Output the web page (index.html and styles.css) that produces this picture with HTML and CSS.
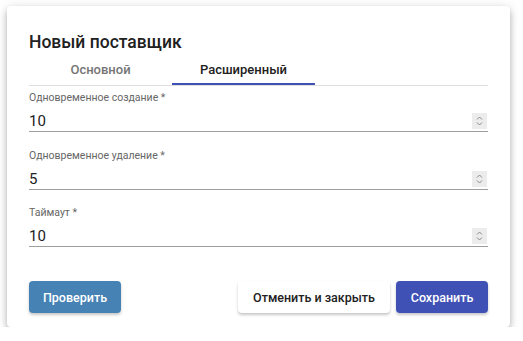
FILE: index.html
```html
<!DOCTYPE html>
<html lang="ru">
<head>
    <meta charset="UTF-8">
    <meta name="viewport" content="width=device-width, initial-scale=1.0">
    <title>Новый поставщик</title>
    <link rel="stylesheet" href="styles.css">
</head>
<body>

<div class="dialog">
    <h2 class="dialog-title">Новый поставщик</h2>

    <div class="tabs">
        <div class="tab">Основной</div>
        <div class="tab active">Расширенный</div>
    </div>

    <div class="field">
        <label>Одновременное создание *</label>
        <div class="input">
            <span class="value">10</span>
            <span class="spinner">
                <svg width="7" height="12" viewBox="0 0 7 12"><path d="M1 4.5 L3.5 2 L6 4.5 M1 7.5 L3.5 10 L6 7.5" fill="none" stroke="#8a8a8a" stroke-width="1"/></svg>
            </span>
        </div>
    </div>

    <div class="field">
        <label>Одновременное удаление *</label>
        <div class="input">
            <span class="value">5</span>
            <span class="spinner">
                <svg width="7" height="12" viewBox="0 0 7 12"><path d="M1 4.5 L3.5 2 L6 4.5 M1 7.5 L3.5 10 L6 7.5" fill="none" stroke="#8a8a8a" stroke-width="1"/></svg>
            </span>
        </div>
    </div>

    <div class="field">
        <label>Таймаут *</label>
        <div class="input">
            <span class="value">10</span>
            <span class="spinner">
                <svg width="7" height="12" viewBox="0 0 7 12"><path d="M1 4.5 L3.5 2 L6 4.5 M1 7.5 L3.5 10 L6 7.5" fill="none" stroke="#8a8a8a" stroke-width="1"/></svg>
            </span>
        </div>
    </div>

    <div class="actions">
        <button class="btn btn-check">Проверить</button>
        <div class="actions-right">
            <button class="btn btn-cancel">Отменить и закрыть</button>
            <button class="btn btn-save">Сохранить</button>
        </div>
    </div>
</div>

</body>
</html>
```

FILE: styles.css
```css
* {
    margin: 0;
    padding: 0;
    box-sizing: border-box;
}

body {
    font-family: Roboto, 'Noto Sans', sans-serif;
    background-color: #fff;
    color: #212121;
}

/* Dialog card */
.dialog {
    width: 503px;
    height: 321px;
    margin: 6px 0 0 7px;
    padding: 24px 22px 14px;
    background-color: #fff;
    border-radius: 4px;
    box-shadow: 0 4px 6px rgba(0, 0, 0, 0.24), 0 1px 12px rgba(0, 0, 0, 0.12);
}

.dialog-title {
    font-size: 17.5px;
    font-weight: 500;
    line-height: 24px;
    color: #212121;
}

/* Tabs */
.tabs {
    display: flex;
    border-bottom: 1px solid #e0e0e0;
    margin-bottom: 5px;
}

.tab {
    width: 143px;
    padding: 8px 0 5px;
    text-align: center;
    font-size: 13px;
    font-weight: 500;
    line-height: 16px;
    color: #757575;
    border-bottom: 2px solid transparent;
}

.tab.active {
    color: #212121;
    border-bottom-color: #3f51b5;
}

/* Fields */
.field {
    margin-bottom: 16.5px;
}

.field label {
    display: block;
    font-size: 10.5px;
    line-height: 14px;
    color: #666;
    margin-bottom: 6px;
}

.input {
    display: flex;
    align-items: center;
    justify-content: space-between;
    height: 21px;
    border-bottom: 1px solid #9e9e9e;
}

.value {
    font-size: 15px;
    line-height: 20px;
    color: #212121;
}

.spinner {
    display: flex;
    align-items: center;
    justify-content: center;
    width: 15px;
    height: 16px;
    margin-right: 1px;
    background-color: #ececec;
}

/* Buttons */
.actions {
    display: flex;
    justify-content: space-between;
    margin-top: 34px;
}

.actions-right {
    display: flex;
    gap: 6px;
}

.btn {
    height: 32px;
    padding: 0 10px;
    font-family: Roboto, sans-serif;
    font-size: 12.5px;
    font-weight: 500;
    border: none;
    border-radius: 4px;
    box-shadow: 0 2px 3px rgba(0, 0, 0, 0.22);
    cursor: pointer;
}

.btn-check {
    background-color: #4682b4;
    color: #fff;
    width: 92px;
}

.btn-cancel {
    background-color: #fff;
    color: #212121;
    width: 152px;
}

.btn-save {
    background-color: #3f51b5;
    color: #fff;
    width: 92px;
}
```
